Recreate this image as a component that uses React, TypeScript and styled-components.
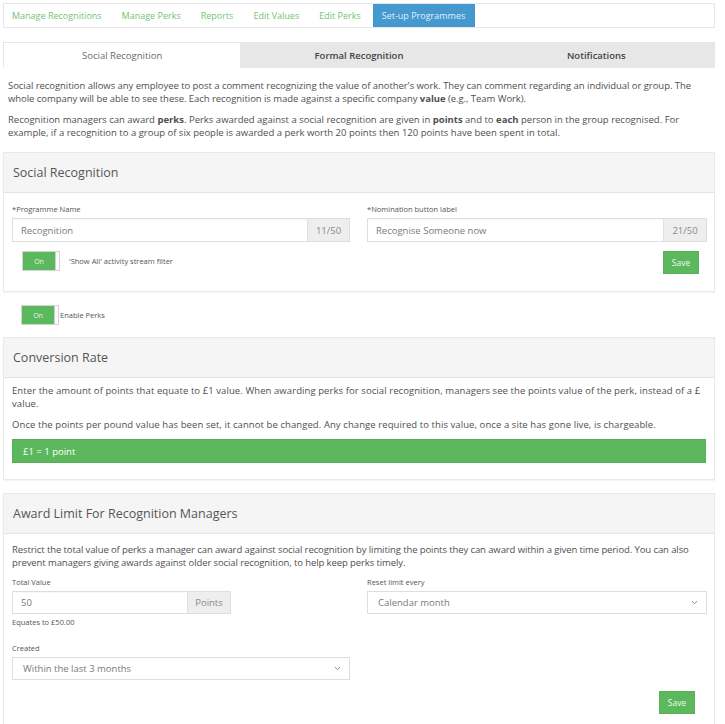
import React from "react";
import styled, { createGlobalStyle, css } from "styled-components";

const GlobalStyle = createGlobalStyle`
  html, body { margin: 0; padding: 0; background: #fff; }
  body {
    font-family: "Open Sans", "Liberation Sans", sans-serif;
    color: #4f4f4f;
    -webkit-font-smoothing: antialiased;
  }
  * { box-sizing: border-box; }
`;

const Page = styled.div`
  width: 725px;
  padding: 3px 10px 0 3px;
`;

/* ---------- top navigation ---------- */
const NavBar = styled.nav`
  display: flex;
  height: 25px;
  border: 1px solid #e6e6e6;
  background: #fff;
`;

const NavItem = styled.a<{ $active?: boolean }>`
  display: flex;
  align-items: center;
  padding: 0 10px;
  font-size: 9px;
  color: #74c374;
  text-decoration: none;
  white-space: nowrap;
  &:first-child { padding-left: 8px; }
  ${(p) =>
    p.$active &&
    css`
      margin-left: 2px;
      padding: 0 10px 0 9px;
      background: #4499cf;
      color: #e3f0f9;
    `}
`;

/* ---------- tabs ---------- */
const Tabs = styled.div`
  display: grid;
  grid-template-columns: repeat(3, 1fr);
  margin-top: 14px;
  height: 26px;
`;

const Tab = styled.div<{ $active?: boolean }>`
  display: flex;
  align-items: center;
  justify-content: center;
  font-size: 9.5px;
  background: ${(p) => (p.$active ? "#fff" : "#e7e7e7")};
  color: ${(p) => (p.$active ? "#6a6a6a" : "#444")};
  font-weight: ${(p) => (p.$active ? 400 : 600)};
  border-top: 1px solid ${(p) => (p.$active ? "#e6e6e6" : "#e7e7e7")};
  border-left: ${(p) => (p.$active ? "1px solid #e6e6e6" : "none")};
`;

/* ---------- text ---------- */
const Intro = styled.div`
  padding: 11px 5px 0 5px;
`;

const Para = styled.p<{ $ls?: number }>`
  margin: 0 0 8px;
  font-size: 9.5px;
  line-height: 13px;
  letter-spacing: ${(p) => p.$ls ?? 0}px;
`;

const Strong = styled.strong`
  font-weight: 700;
`;

/* ---------- panels ---------- */
const Panel = styled.section<{ $open?: boolean; $mt?: number }>`
  margin-top: ${(p) => p.$mt ?? 13}px;
  border: 1px solid #e9e9e9;
  ${(p) => p.$open && css`border-bottom: none;`}
  box-shadow: 0 1px 1px rgba(0, 0, 0, 0.04);
  background: #fff;
`;

const PanelHeader = styled.header`
  height: 40px;
  display: flex;
  align-items: center;
  padding-left: 9px;
  background: #f5f5f5;
  border-bottom: 1px solid #e3e3e3;
  font-size: 12.5px;
  color: #555;
`;

const PanelBody = styled.div<{ $pt?: number; $pb?: number }>`
  padding: ${(p) => p.$pt ?? 11}px 8px ${(p) => p.$pb ?? 17}px 8px;
`;

const TwoCol = styled.div`
  display: grid;
  grid-template-columns: 338px 340px;
  column-gap: 17px;
  align-items: start;
`;

const Col = styled.div`
  display: flex;
  flex-direction: column;
`;

const Label = styled.label<{ $mt?: number }>`
  display: block;
  font-size: 7.5px;
  line-height: 10px;
  color: #555;
  margin-top: ${(p) => p.$mt ?? 0}px;
  margin-bottom: 4px;
`;

const InputGroup = styled.div<{ $w?: number; $h?: number }>`
  display: flex;
  width: ${(p) => (p.$w ? `${p.$w}px` : "100%")};
  height: ${(p) => p.$h ?? 24}px;
  border: 1px solid #dedede;
  box-shadow: inset 0 1px 1px rgba(0, 0, 0, 0.03);
  background: #fff;
`;

const InputText = styled.div`
  flex: 1;
  display: flex;
  align-items: center;
  padding-left: 8px;
  font-size: 9.5px;
  color: #7a7a7a;
`;

const Addon = styled.div<{ $w: number }>`
  width: ${(p) => p.$w}px;
  display: flex;
  align-items: center;
  justify-content: center;
  background: #eeeeee;
  border-left: 1px solid #e0e0e0;
  font-size: 9.5px;
  color: #8a8a8a;
`;

const Select = styled.div`
  display: flex;
  align-items: center;
  justify-content: space-between;
  width: 100%;
  height: 23px;
  border: 1px solid #dedede;
  padding: 0 8px 0 10px;
  font-size: 9.5px;
  color: #7a7a7a;
  background: #fff;
`;

const Hint = styled.div`
  font-size: 7.5px;
  line-height: 10px;
  color: #555;
  margin-top: 3px;
`;

/* ---------- switch ---------- */
const SwitchRow = styled.div<{ $mt: number; $ml: number }>`
  display: flex;
  align-items: center;
  gap: 9px;
  margin-top: ${(p) => p.$mt}px;
  margin-left: ${(p) => p.$ml}px;
`;

const Switch = styled.div`
  display: flex;
  width: 38px;
  height: 20px;
  border: 1px solid #d4d4d4;
  background: #fff;
`;

const SwitchOn = styled.span`
  width: 32px;
  display: flex;
  align-items: center;
  justify-content: center;
  background: #5cb85c;
  color: #e8f5e8;
  font-size: 7px;
`;

const SwitchHandle = styled.span`
  flex: 1;
  border-left: 1px solid #cfcfcf;
  background: #fafafa;
`;

const SwitchLabel = styled.span<{ $tight?: boolean }>`
  font-size: 7.5px;
  color: #555;
  margin-left: ${(p) => (p.$tight ? "-8px" : "0")};
`;

/* ---------- buttons & bars ---------- */
const ButtonRow = styled.div<{ $mt: number; $mr: number }>`
  display: flex;
  justify-content: flex-end;
  margin-top: ${(p) => p.$mt}px;
  margin-right: ${(p) => p.$mr}px;
`;

const SaveButton = styled.button`
  width: 36px;
  height: 23px;
  border: 1px solid #58b158;
  background: #5cb85c;
  color: #eef8ee;
  font-family: inherit;
  font-size: 8.5px;
  padding: 0;
`;

const RateBar = styled.div`
  height: 24px;
  display: flex;
  align-items: center;
  padding-left: 10px;
  background: #5cb85c;
  border: 1px solid #55b055;
  color: #fff;
  font-size: 9.5px;
`;

const Chevron = () => (
  <svg width="7" height="5" viewBox="0 0 7 5" fill="none">
    <path d="M1 1.2 L3.5 3.6 L6 1.2" stroke="#8a8a8a" strokeWidth="1" />
  </svg>
);

const Toggle = ({ label, tight }: { label: string; tight?: boolean }) => (
  <>
    <Switch>
      <SwitchOn>On</SwitchOn>
      <SwitchHandle />
    </Switch>
    <SwitchLabel $tight={tight}>{label}</SwitchLabel>
  </>
);

const navItems = [
  "Manage Recognitions",
  "Manage Perks",
  "Reports",
  "Edit Values",
  "Edit Perks",
  "Set-up Programmes",
];

export default function App() {
  return (
    <>
      <GlobalStyle />
      <Page>
        <NavBar>
          {navItems.map((n) => (
            <NavItem key={n} $active={n === "Set-up Programmes"}>
              {n}
            </NavItem>
          ))}
        </NavBar>

        <Tabs>
          <Tab $active>Social Recognition</Tab>
          <Tab>Formal Recognition</Tab>
          <Tab>Notifications</Tab>
        </Tabs>

        <Intro>
          <Para $ls={-0.05}>
            Social recognition allows any employee to post a comment recognizing the value of
            another's work. They can comment regarding an individual or group. The whole company
            will be able to see these. Each recognition is made against a specific company{" "}
            <Strong>value</Strong> (e.g., Team Work).
          </Para>
          <Para>
            Recognition managers can award <Strong>perks</Strong>. Perks awarded against a social
            recognition are given in <Strong>points</Strong> and to <Strong>each</Strong> person in
            the group recognised. For example, if a recognition to a group of six people is awarded
            a perk worth 20 points then 120 points have been spent in total.
          </Para>
        </Intro>

        <Panel>
          <PanelHeader>Social Recognition</PanelHeader>
          <PanelBody>
            <TwoCol>
              <Col>
                <Label>*Programme Name</Label>
                <InputGroup>
                  <InputText>Recognition</InputText>
                  <Addon $w={42}>11/50</Addon>
                </InputGroup>
                <SwitchRow $mt={9} $ml={10}>
                  <Toggle label="'Show All' activity stream filter" />
                </SwitchRow>
              </Col>
              <Col>
                <Label>*Nomination button label</Label>
                <InputGroup>
                  <InputText>Recognise Someone now</InputText>
                  <Addon $w={43}>21/50</Addon>
                </InputGroup>
                <ButtonRow $mt={9} $mr={8}>
                  <SaveButton>Save</SaveButton>
                </ButtonRow>
              </Col>
            </TwoCol>
          </PanelBody>
        </Panel>

        <SwitchRow $mt={13} $ml={18}>
          <Toggle label="Enable Perks" tight />
        </SwitchRow>

        <Panel $mt={12}>
          <PanelHeader>Conversion Rate</PanelHeader>
          <PanelBody $pt={6} $pb={16}>
            <Para $ls={0.08}>
              Enter the amount of points that equate to £1 value. When awarding perks for social
              recognition, managers see the points value of the perk, instead of a £ value.
            </Para>
            <Para $ls={0.08}>
              Once the points per pound value has been set, it cannot be changed. Any change
              required to this value, once a site has gone live, is chargeable.
            </Para>
            <RateBar>£1 = 1 point</RateBar>
          </PanelBody>
        </Panel>

        <Panel $open $mt={13}>
          <PanelHeader>Award Limit For Recognition Managers</PanelHeader>
          <PanelBody $pt={9} $pb={30}>
            <Para $ls={-0.1}>
              Restrict the total value of perks a manager can award against social recognition by
              limiting the points they can award within a given time period. You can also prevent
              managers giving awards against older social recognition, to help keep perks timely.
            </Para>
            <TwoCol>
              <Col>
                <Label>Total Value</Label>
                <InputGroup $w={219} $h={23}>
                  <InputText>50</InputText>
                  <Addon $w={43}>Points</Addon>
                </InputGroup>
                <Hint>Equates to £50.00</Hint>
                <Label $mt={16}>Created</Label>
                <Select>
                  Within the last 3 months
                  <Chevron />
                </Select>
              </Col>
              <Col>
                <Label>Reset limit every</Label>
                <Select>
                  Calendar month
                  <Chevron />
                </Select>
              </Col>
            </TwoCol>
            <ButtonRow $mt={11} $mr={11}>
              <SaveButton>Save</SaveButton>
            </ButtonRow>
          </PanelBody>
        </Panel>
      </Page>
    </>
  );
}
